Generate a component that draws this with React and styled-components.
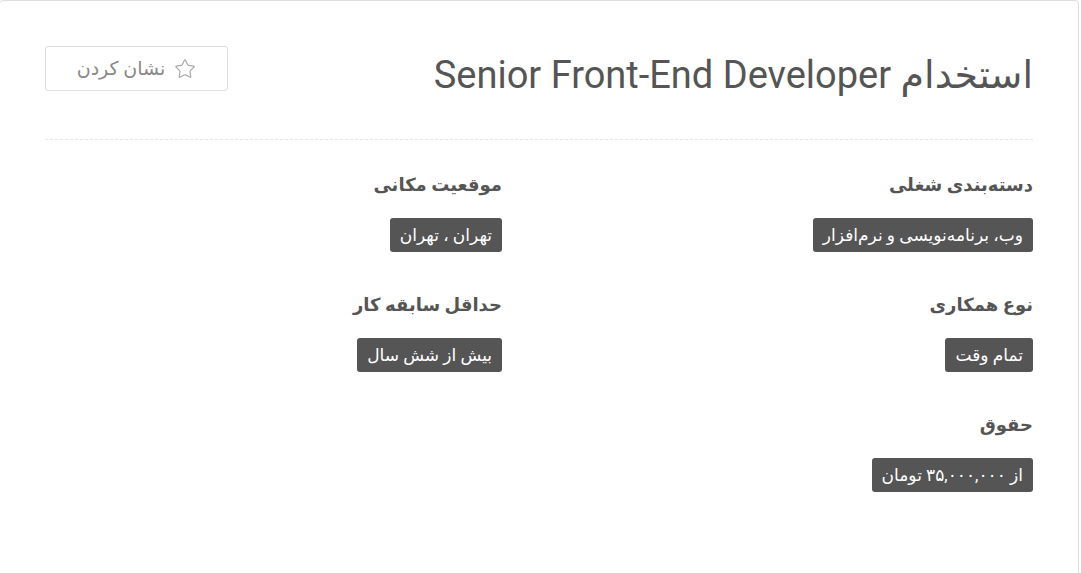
import React from 'react'
import styled, { createGlobalStyle } from 'styled-components'
import { Star } from 'lucide-react'

const GlobalStyle = createGlobalStyle`
  html, body {
    margin: 0;
    padding: 0;
    background: #fff;
  }
  body {
    font-family: Roboto, "DejaVu Sans", sans-serif;
    color: #555;
  }
`

const Card = styled.div`
  direction: rtl;
  width: 1080px;
  margin-left: -1px;
  min-height: 600px;
  box-sizing: border-box;
  border: 1px solid #ddd;
  border-radius: 4px;
  padding: 45px 45px 40px 45px;
  background: #fff;
`

const Header = styled.div`
  display: flex;
  justify-content: space-between;
  align-items: flex-start;
  padding-bottom: 41px;
  border-bottom: 1px dashed #e6e6e6;
`

const Title = styled.h1`
  margin: 6px 0 0;
  font-size: 38px;
  font-weight: 400;
  line-height: 46px;
  color: #555;
`

const MarkButton = styled.button`
  direction: rtl;
  display: flex;
  align-items: center;
  justify-content: center;
  gap: 9px;
  width: 183px;
  height: 45px;
  padding: 0;
  background: #fff;
  border: 1px solid #ddd;
  border-radius: 3px;
  color: #888;
  font-family: inherit;
  font-size: 19px;
  cursor: pointer;
`

const Details = styled.div`
  display: grid;
  grid-template-columns: 456px 456px;
  column-gap: 75px;
  row-gap: 38px;
  padding-top: 30px;
`

const Field = styled.div`
  display: flex;
  flex-direction: column;
  align-items: flex-start;
`

const Label = styled.h4`
  margin: 0 0 18px;
  font-size: 18px;
  font-weight: 700;
  line-height: 30px;
  color: #555;
`

const Tag = styled.span`
  display: inline-block;
  background: #555;
  color: #fff;
  border-radius: 3px;
  padding: 0 10px;
  height: 34px;
  line-height: 34px;
  font-size: 17px;
`

const fields = [
  { label: 'دسته‌بندی شغلی', value: 'وب، برنامه‌نویسی و نرم‌افزار' },
  { label: 'موقعیت مکانی', value: 'تهران ، تهران' },
  { label: 'نوع همکاری', value: 'تمام وقت' },
  { label: 'حداقل سابقه کار', value: 'بیش از شش سال' },
  { label: 'حقوق', value: 'از ۳۵,۰۰۰,۰۰۰ تومان' },
]

const App = () => {
  return (
    <>
      <GlobalStyle />
      <Card>
        <Header>
          <Title>استخدام Senior Front-End Developer</Title>
          <MarkButton>
            <Star size={22} strokeWidth={1.3} color="#aaa" />
            نشان کردن
          </MarkButton>
        </Header>
        <Details>
          {fields.map((f) => (
            <Field key={f.label}>
              <Label>{f.label}</Label>
              <Tag>{f.value}</Tag>
            </Field>
          ))}
        </Details>
      </Card>
    </>
  )
}

export default App
